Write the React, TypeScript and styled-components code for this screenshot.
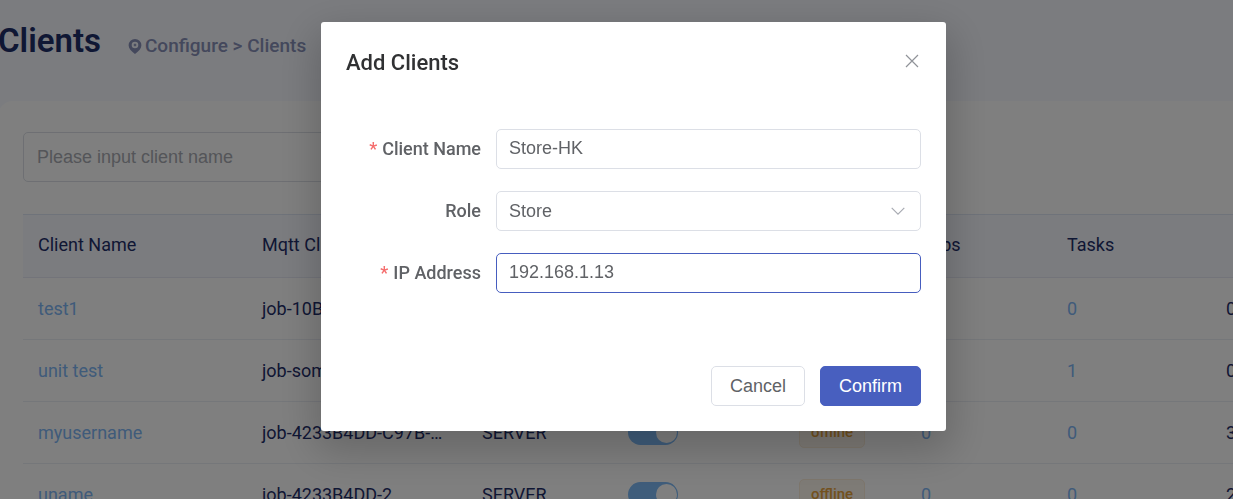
import React from "react";
import styled, { createGlobalStyle } from "styled-components";

const ui = `Roboto, "Liberation Sans", sans-serif`;
const field = `"Liberation Sans", Arial, sans-serif`;

const GlobalStyle = createGlobalStyle`
  *, *::before, *::after { box-sizing: border-box; }
  body {
    margin: 0;
    background: #f6f8ff;
    color: #1f2e69;
    font-family: ${ui};
    font-size: 18px;
    line-height: 24px;
    overflow: hidden;
  }
`;

const Page = styled.div`
  height: 100vh;
  margin-left: -2px;
  overflow: hidden;
`;

const PageHeader = styled.header`
  display: flex;
  align-items: center;
  gap: 27px;
  padding: 21px 0 40px;
`;

const PageTitle = styled.h1`
  margin: 0;
  font-size: 33px;
  font-weight: 600;
  line-height: 40px;
`;

const Breadcrumb = styled.nav`
  display: flex;
  align-items: center;
  gap: 3px;
  padding-top: 10px;
  font-size: 19px;
  font-weight: 500;
  color: #8890b8;
`;

const Card = styled.main`
  padding: 31px 0 0 25px;
  border-radius: 15px 0 0 0;
  background: #fff;
`;

const SearchInput = styled.input`
  display: block;
  width: 375px;
  height: 50px;
  padding: 0 13px;
  border: 1px solid #dcdfe6;
  border-radius: 5px;
  background: #fff;
  font-family: ${field};
  font-size: 18px;
  &::placeholder { color: #a8abb2; opacity: 1; }
`;

const Table = styled.table`
  width: 1400px;
  margin-top: 32px;
  border-collapse: separate;
  border-spacing: 0;
  table-layout: fixed;
`;

const Col = styled.col<{ $w?: number }>`
  width: ${(p) => (p.$w ? `${p.$w}px` : "auto")};
`;

const Th = styled.th`
  height: 64px;
  padding: 0 15px 2px;
  border-top: 1px solid #dfe7f5;
  border-bottom: 1px solid #e6e9f5;
  background: #f6f8ff;
  text-align: left;
  font-weight: 400;
  white-space: nowrap;
`;

const Td = styled.td`
  height: 62px;
  padding: 0 15px;
  border-bottom: 1px solid #ebeef5;
  white-space: nowrap;
  overflow: hidden;
  text-overflow: ellipsis;
`;

const Link = styled.a`
  color: #7fb6f5;
  text-decoration: none;
`;

const Switch = styled.input`
  appearance: none;
  display: block;
  width: 50px;
  height: 25px;
  margin: 0;
  border-radius: 13px;
  background: #7fbbf7;
  &::before {
    content: "";
    display: block;
    width: 21px;
    height: 21px;
    margin: 2px 1px 2px 28px;
    border-radius: 50%;
    background: #fff;
  }
`;

const Tag = styled.span`
  display: inline-block;
  height: 31px;
  padding: 0 11px;
  border: 1px solid #faecd8;
  border-radius: 5px;
  background: #fdf6ec;
  color: #e6a23c;
  font-size: 15px;
  font-weight: 500;
  line-height: 29px;
  vertical-align: middle;
`;

const Overlay = styled.div`
  position: fixed;
  inset: 0;
  display: flex;
  justify-content: center;
  align-items: flex-start;
  padding: 22px 0 0 34px;
  background: rgba(0, 0, 0, 0.5);
`;

const Dialog = styled.section`
  width: 100%;
  max-width: 625px;
  padding: 25px;
  border-radius: 3px;
  background: #fff;
  box-shadow: 0 15px 40px 5px rgba(0, 0, 0, 0.2);
  color: #606266;
`;

const DialogHeader = styled.div`
  display: flex;
  justify-content: space-between;
  align-items: center;
  height: 32px;
`;

const DialogTitle = styled.h2`
  margin: 0;
  font-size: 22px;
  font-weight: 500;
  line-height: 32px;
  color: #303133;
`;

const CloseButton = styled.button`
  display: flex;
  padding: 0 2px 4px;
  border: 0;
  background: none;
  color: #909399;
`;

const Form = styled.form`
  display: flex;
  flex-direction: column;
  gap: 22px;
  padding: 50px 0 73px;
`;

const FormItem = styled.div`
  display: grid;
  grid-template-columns: 135px 1fr;
  column-gap: 15px;
  align-items: center;
`;

const Label = styled.label<{ $required?: boolean }>`
  text-align: right;
  font-weight: 500;
  ${(p) => p.$required && `&::before { content: "*"; margin-right: 5px; color: #f56c6c; }`}
`;

const TextInput = styled.input<{ $active?: boolean }>`
  width: 100%;
  height: 40px;
  padding: 0 12px 2px;
  border: 1px solid ${(p) => (p.$active ? "#465dbf" : "#dcdfe6")};
  border-radius: 5px;
  outline: 0;
  background: #fff;
  font-family: ${field};
  font-size: 18px;
  color: #606266;
`;

const SelectBox = styled.div`
  display: grid;
  align-items: center;
  > * { grid-area: 1 / 1; }
  > svg { justify-self: end; margin-right: 16px; pointer-events: none; }
`;

const Select = styled.select`
  appearance: none;
  width: 100%;
  height: 40px;
  padding: 0 12px;
  border: 1px solid #dcdfe6;
  border-radius: 5px;
  background: #fff;
  font-family: ${field};
  font-size: 18px;
  color: #606266;
`;

const DialogFooter = styled.div`
  display: flex;
  justify-content: flex-end;
  gap: 15px;
`;

const Button = styled.button<{ $primary?: boolean }>`
  height: 40px;
  padding: 0 18px;
  border: 1px solid ${(p) => (p.$primary ? "#485fbf" : "#dcdfe6")};
  border-radius: 5px;
  background: ${(p) => (p.$primary ? "#485fbf" : "#fff")};
  color: ${(p) => (p.$primary ? "#fff" : "#606266")};
  font-family: ${field};
  font-size: 18px;
`;

const PinIcon = () => (
  <svg width="14" height="15" viewBox="0 0 14 15" aria-hidden="true">
    <path
      fillRule="evenodd"
      fill="currentColor"
      d="M7 0a6.4 6.400 0 0 1 6.400 6.300c0 3.300-2.400 5.600-6.400 8.700C3 11.900.6 9.600.6 6.300A6.400 6.400 0 0 1 7 0Zm0 2.700a3.300 3.300 0 1 0 0 6.600 3.300 3.300 0 0 0 0-6.600Z"
    />
    <path fill="currentColor" d="M7 4.300l.7 1 1 .7-1 .7-.7 1-.7-1-1-.7 1-.7Z" />
  </svg>
);

const CloseIcon = () => (
  <svg width="14" height="14" viewBox="0 0 14 14" fill="none" stroke="currentColor" strokeWidth="1.2" aria-hidden="true">
    <path d="M1 1l12 12M13 1L1 13" />
  </svg>
);

const ChevronIcon = () => (
  <svg width="14" height="8" viewBox="0 0 14 8" fill="none" stroke="#a8abb2" strokeWidth="1.2" aria-hidden="true">
    <path d="M.7.9L7 7.100 13.300.9" />
  </svg>
);

const columns = [
  { title: "Client Name", width: 224 },
  { title: "Mqtt Client ID", width: 220 },
  { title: "Role", width: 146 },
  { title: "Enabled", width: 171 },
  { title: "Status", width: 122 },
  { title: "Jobs", width: 146 },
  { title: "Tasks", width: 159 },
  { title: "" },
];

const clients = [
  { name: "test1", mqtt: "job-10B", role: "SERVER", jobs: 0, tasks: 0, last: "0" },
  { name: "unit test", mqtt: "job-some", role: "SERVER", jobs: 0, tasks: 1, last: "0" },
  { name: "myusername", mqtt: "job-4233B4DD-C97B-4A21", role: "SERVER", jobs: 0, tasks: 0, last: "3" },
  { name: "uname", mqtt: "job-4233B4DD-2", role: "SERVER", jobs: 0, tasks: 0, last: "2" },
];

export default function App() {
  return (
    <>
      <GlobalStyle />
      <Page>
        <PageHeader>
          <PageTitle>Clients</PageTitle>
          <Breadcrumb aria-label="Breadcrumb">
            <PinIcon />
            <span>Configure &gt; Clients</span>
          </Breadcrumb>
        </PageHeader>
        <Card>
          <SearchInput aria-label="Client name filter" placeholder="Please input client name" />
          <Table>
            <colgroup>
              {columns.map((c, i) => (
                <Col key={i} $w={c.width} />
              ))}
            </colgroup>
            <thead>
              <tr>
                {columns.map((c, i) => (
                  <Th key={i}>{c.title}</Th>
                ))}
              </tr>
            </thead>
            <tbody>
              {clients.map((c) => (
                <tr key={c.name}>
                  <Td><Link href="#client">{c.name}</Link></Td>
                  <Td>{c.mqtt}</Td>
                  <Td>{c.role}</Td>
                  <Td><Switch type="checkbox" role="switch" defaultChecked aria-label={`Enable ${c.name}`} /></Td>
                  <Td><Tag>offline</Tag></Td>
                  <Td><Link href="#jobs">{c.jobs}</Link></Td>
                  <Td><Link href="#tasks">{c.tasks}</Link></Td>
                  <Td>{c.last}</Td>
                </tr>
              ))}
            </tbody>
          </Table>
        </Card>
      </Page>
      <Overlay>
        <Dialog role="dialog" aria-modal="true" aria-labelledby="dialog-title">
          <DialogHeader>
            <DialogTitle id="dialog-title">Add Clients</DialogTitle>
            <CloseButton type="button" aria-label="Close"><CloseIcon /></CloseButton>
          </DialogHeader>
          <Form id="client-form">
            <FormItem>
              <Label htmlFor="client-name" $required>Client Name</Label>
              <TextInput id="client-name" defaultValue="Store-HK" />
            </FormItem>
            <FormItem>
              <Label htmlFor="role">Role</Label>
              <SelectBox>
                <Select id="role" defaultValue="Store">
                  <option>Store</option>
                  <option>Server</option>
                </Select>
                <ChevronIcon />
              </SelectBox>
            </FormItem>
            <FormItem>
              <Label htmlFor="ip-address" $required>IP Address</Label>
              <TextInput id="ip-address" defaultValue="192.168.1.13" $active />
            </FormItem>
          </Form>
          <DialogFooter>
            <Button type="button">Cancel</Button>
            <Button type="button" $primary>Confirm</Button>
          </DialogFooter>
        </Dialog>
      </Overlay>
    </>
  );
}
